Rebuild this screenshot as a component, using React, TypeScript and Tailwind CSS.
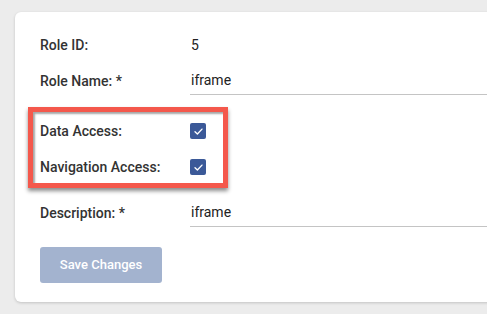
import React from "react";

function Check() {
  return (
    <span className="flex h-[16px] w-[16px] items-center justify-center rounded-[2px] bg-[#3b5998]">
      <svg width="11" height="11" viewBox="0 0 12 12" fill="none">
        <path
          d="M2.2 6.3 L4.8 8.7 L9.8 3.4"
          stroke="white"
          strokeWidth="1.5"
          strokeLinecap="round"
          strokeLinejoin="round"
        />
      </svg>
    </span>
  );
}

export default function App() {
  return (
    <div
      className="h-[314px] w-[487px] overflow-hidden bg-[#ececec] pt-[12px] pl-[15px]"
      style={{ fontFamily: "Roboto, 'Liberation Sans', sans-serif" }}
    >
      <div className="w-[520px] rounded-[6px] bg-white pt-[21px] pb-[19px] pl-[25px] shadow-[0_1px_3px_rgba(0,0,0,0.18)]">
        <div className="flex h-[24px] items-center text-[14px]">
          <div className="w-[151px] font-medium text-[#333]">Role ID:</div>
          <div className="text-[#222]">5</div>
        </div>

        <div className="mt-[10px] flex h-[28px] items-center text-[14px]">
          <div className="w-[150px] font-medium text-[#333]">Role Name: *</div>
          <div className="flex h-full flex-1 items-center border-b border-[#c4c4c4] pl-[1px] text-[#222]">
            iframe
          </div>
        </div>

        <div className="-ml-[12px] mt-[12px] w-[200px] border-[5px] border-[#f4584c] pt-[7px] pb-[4px] pl-[7px] shadow-[0_3px_4px_rgba(0,0,0,0.45),inset_2px_2px_2px_rgba(0,0,0,0.35)]">
          <div className="flex h-[24px] items-center text-[14px]">
            <div className="w-[150px] font-medium text-[#333]">Data Access:</div>
            <Check />
          </div>
          <div className="mt-[12px] flex h-[24px] items-center text-[14px]">
            <div className="w-[150px] font-medium text-[#333]">Navigation Access:</div>
            <Check />
          </div>
        </div>

        <div className="mt-[11px] flex h-[28px] items-center text-[14px]">
          <div className="w-[150px] font-medium text-[#333]">Description: *</div>
          <div className="flex h-full flex-1 items-center border-b border-[#c4c4c4] pl-[1px] text-[#222]">
            iframe
          </div>
        </div>

        <button className="mt-[20px] h-[36px] w-[122px] rounded-[3px] bg-[#a3b3cf] text-[13px] font-medium text-white">
          Save Changes
        </button>
      </div>
    </div>
  );
}
